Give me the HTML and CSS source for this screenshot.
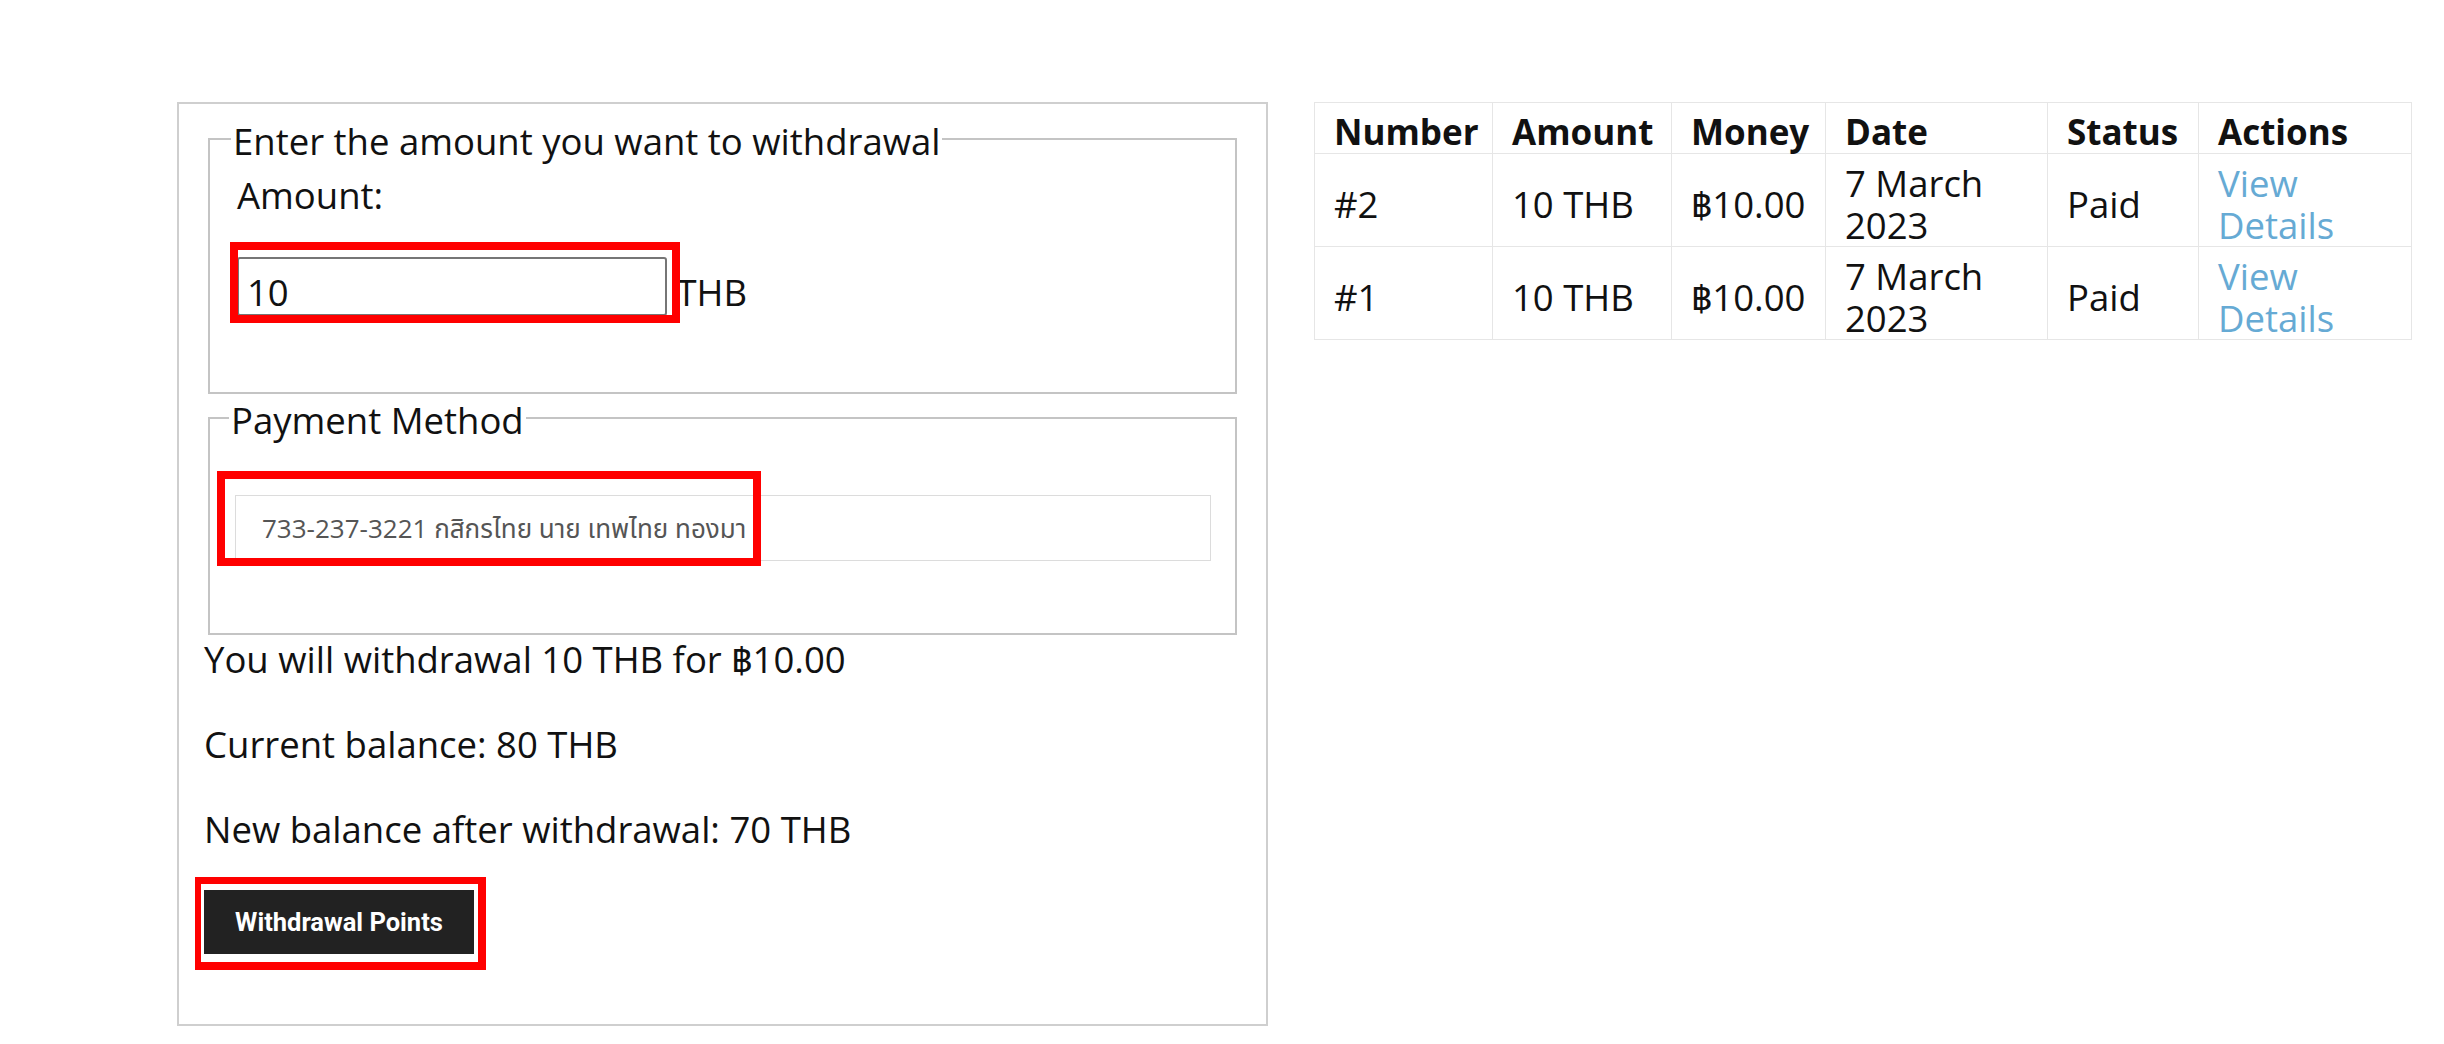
FILE: index.html
```html
<!DOCTYPE html>
<html lang="en">
<head>
  <meta charset="UTF-8" />
  <meta name="viewport" content="width=device-width, initial-scale=1" />
  <title>Withdrawal Points</title>
  <link rel="stylesheet" href="styles.css">
</head>
<body>

<div class="layout">
  <div class="withdraw-box">
    <fieldset class="group group-amount">
      <legend>Enter the amount you want to withdrawal</legend>
      <label class="field-label" for="amount">Amount:</label>
      <div class="amount-row">
        <span class="mark-wrap">
          <input id="amount" class="amount-input" type="text" value="10" />
          <span class="annot annot-amount"></span>
        </span> THB
      </div>
    </fieldset>

    <fieldset class="group group-pay">
      <legend>Payment Method</legend>
      <div class="mark-wrap">
        <div class="pay-select">733-237-3221 กสิกรไทย นาย เทพไทย ทองมา</div>
        <span class="annot annot-pay"></span>
      </div>
    </fieldset>

    <div class="summary">You will withdrawal 10 THB for ฿10.00</div>
    <p>Current balance: 80 THB</p>
    <p>New balance after withdrawal: 70 THB</p>

    <span class="mark-wrap">
      <button class="withdraw-btn">Withdrawal Points</button>
      <span class="annot annot-btn"></span>
    </span>
  </div>

  <table class="history">
    <thead>
      <tr>
        <th class="col-number">Number</th>
        <th class="col-amount">Amount</th>
        <th class="col-money">Money</th>
        <th class="col-date">Date</th>
        <th class="col-status">Status</th>
        <th class="col-actions">Actions</th>
      </tr>
    </thead>
    <tbody>
      <tr>
        <td>#2</td>
        <td>10 THB</td>
        <td>฿10.00</td>
        <td>7 March 2023</td>
        <td>Paid</td>
        <td><a href="#">View Details</a></td>
      </tr>
      <tr>
        <td>#1</td>
        <td>10 THB</td>
        <td>฿10.00</td>
        <td>7 March 2023</td>
        <td>Paid</td>
        <td><a href="#">View Details</a></td>
      </tr>
    </tbody>
  </table>
</div>

</body>
</html>
```

FILE: styles.css
```css
body {
  font-family: 'Open Sans', 'Noto Sans Thai', 'Leelawadee UI', 'DejaVu Sans', sans-serif;
  font-size: 36.5px;
  line-height: 49px;
  color: #111;
  background: #fff;
  margin: 0;
}
.layout {
  display: flex;
  align-items: flex-start;
  gap: 46px;
  padding: 102px 0 0 177px;
}
.withdraw-box {
  width: 1091px;
  box-sizing: border-box;
  border: 2px solid #cfcfcf;
  padding: 11px 25px 70px;
}
.group {
  margin: 0 4px;
  padding: 0 24px 0 27px;
  border: 2px solid #c4c4c4;
  min-width: 0;
}
.group legend {
  padding: 4px 2px 0;
  margin-left: -6px;
  line-height: 44px;
}
.group-amount {
  padding-bottom: 75px;
}
.group-pay {
  padding: 0 24px 72px 25px;
}
.field-label {
  display: block;
  margin-top: 8px;
}
.amount-row {
  margin-top: 37px;
}
.mark-wrap {
  position: relative;
  display: inline-block;
}
.amount-input {
  width: 430px;
  height: 59px;
  box-sizing: border-box;
  border: 2px solid #767676;
  border-radius: 3px;
  padding: 10px 8px 0;
  font: inherit;
  line-height: 49px;
  color: #111;
  vertical-align: baseline;
}
.group-pay .mark-wrap {
  display: block;
  margin-top: 53px;
}
.pay-select {
  height: 66px;
  box-sizing: border-box;
  border: 1px solid #dcdcdc;
  padding: 0 26px;
  font-size: 26px;
  line-height: 64px;
  color: #555;
}
.annot {
  position: absolute;
  border: 8px solid #f00;
  box-sizing: border-box;
  pointer-events: none;
}
.annot-amount {
  left: -7px;
  top: -15px;
  width: 450px;
  height: 81px;
}
.annot-pay {
  left: -18px;
  top: -24px;
  width: 544px;
  height: 95px;
}
.annot-btn {
  left: -9px;
  top: -13px;
  width: 291px;
  height: 93px;
  border-width: 7px 8px 8px 6px;
}
.summary {
  margin: 0;
}
.withdraw-box p {
  margin: 36px 0;
}
.withdraw-btn {
  display: block;
  font-family: Roboto, 'Liberation Sans', sans-serif;
  font-weight: 700;
  font-size: 25.5px;
  line-height: 30px;
  color: #fff;
  background: #222;
  border: none;
  padding: 17px 0;
  width: 270px;
  height: 64px;
}
.history {
  width: 1097px;
  border-collapse: collapse;
  table-layout: fixed;
}
.history th,
.history td {
  border: 1px solid #e6e6e6;
  padding: 8px 19px 0;
  line-height: 42px;
  text-align: left;
  vertical-align: middle;
  box-sizing: border-box;
}
.history th {
  font-weight: 700;
  font-size: 35px;
}
.col-number { width: 178px; }
.col-amount { width: 179px; }
.col-money { width: 154px; }
.col-date { width: 222px; }
.col-status { width: 151px; }
.col-actions { width: 213px; }
.history a {
  color: #66aad4;
  text-decoration: none;
}
```
